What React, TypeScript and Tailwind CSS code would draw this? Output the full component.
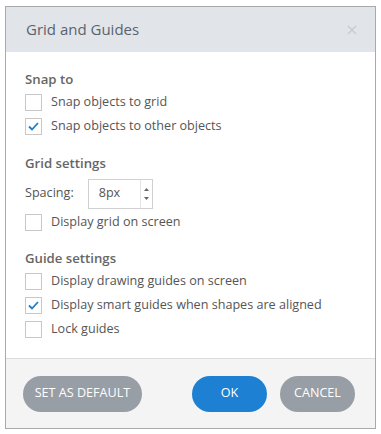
import React from "react";

const Check = ({ checked, label }: { checked?: boolean; label: string }) => (
  <div className="flex h-[24px] items-center">
    <div className="flex h-[17px] w-[17px] items-center justify-center border border-[#c8c8c8] bg-white">
      {checked && (
        <svg width="13" height="13" viewBox="0 0 13 13">
          <path d="M2 6.5 L5 9.5 L11 3" fill="none" stroke="#1f7dc4" strokeWidth="1.8" />
        </svg>
      )}
    </div>
    <span className="ml-[9px] text-[12.6px] text-[#555]">{label}</span>
  </div>
);

const App = () => {
  return (
    <div
      className="h-[434px] w-[381px] bg-white pl-[5px] pt-[6px]"
      style={{ fontFamily: "'Open Sans', 'Noto Sans', sans-serif" }}
    >
      <div className="flex h-[423px] w-[371px] flex-col border border-[#a9a9a9] bg-white">
        <div className="flex h-[45px] items-center justify-between bg-[#e1e5ea] pl-[20px] pr-[18px]">
          <span className="text-[15px] text-[#5a636d]">Grid and Guides</span>
          <svg width="10" height="10" viewBox="0 0 10 10">
            <path d="M1 1 L9 9 M9 1 L1 9" stroke="#c4c9ce" strokeWidth="1.2" />
          </svg>
        </div>
        <div className="flex-1 pl-[19px] pt-[18px]">
          <div className="text-[13.2px] font-semibold text-[#666]">Snap to</div>
          <div className="mt-[1px]">
            <Check label="Snap objects to grid" />
            <Check checked label="Snap objects to other objects" />
          </div>
          <div className="mt-[15px] text-[13.2px] font-semibold text-[#666]">Grid settings</div>
          <div className="mt-[5px] flex items-center">
            <span className="text-[12.6px] text-[#555]">Spacing:</span>
            <div className="ml-[14px] flex h-[30px] w-[65px] items-center border border-[#d0d0d0]">
              <span className="ml-[10px] flex-1 text-[12.6px] text-[#555]">8px</span>
              <div className="flex h-full w-[12px] flex-col items-center justify-center gap-[6px] border-l border-[#e4e4e4]">
                <svg width="5" height="3" viewBox="0 0 5 3">
                  <path d="M0 3 L2.5 0 L5 3 Z" fill="#666" />
                </svg>
                <svg width="5" height="3" viewBox="0 0 5 3">
                  <path d="M0 0 L2.5 3 L5 0 Z" fill="#666" />
                </svg>
              </div>
            </div>
          </div>
          <div className="mt-[2px]">
            <Check label="Display grid on screen" />
          </div>
          <div className="mt-[14px] text-[13.2px] font-semibold text-[#666]">Guide settings</div>
          <div className="mt-[1px]">
            <Check label="Display drawing guides on screen" />
            <Check checked label="Display smart guides when shapes are aligned" />
            <Check label="Lock guides" />
          </div>
        </div>
        <div className="flex h-[70px] items-center border-t border-[#dcdcdc] bg-[#f4f4f4] pl-[17px] pr-[20px]">
          <button className="h-[36px] w-[119px] rounded-full bg-[#979ea5] text-[12.6px] text-white">
            SET AS DEFAULT
          </button>
          <div className="flex-1" />
          <button className="h-[36px] w-[75px] rounded-full bg-[#1d80d2] text-[12.6px] text-white">OK</button>
          <button className="ml-[13px] h-[36px] w-[75px] rounded-full bg-[#979ea5] text-[12.6px] text-white">
            CANCEL
          </button>
        </div>
      </div>
    </div>
  );
};

export default App;
